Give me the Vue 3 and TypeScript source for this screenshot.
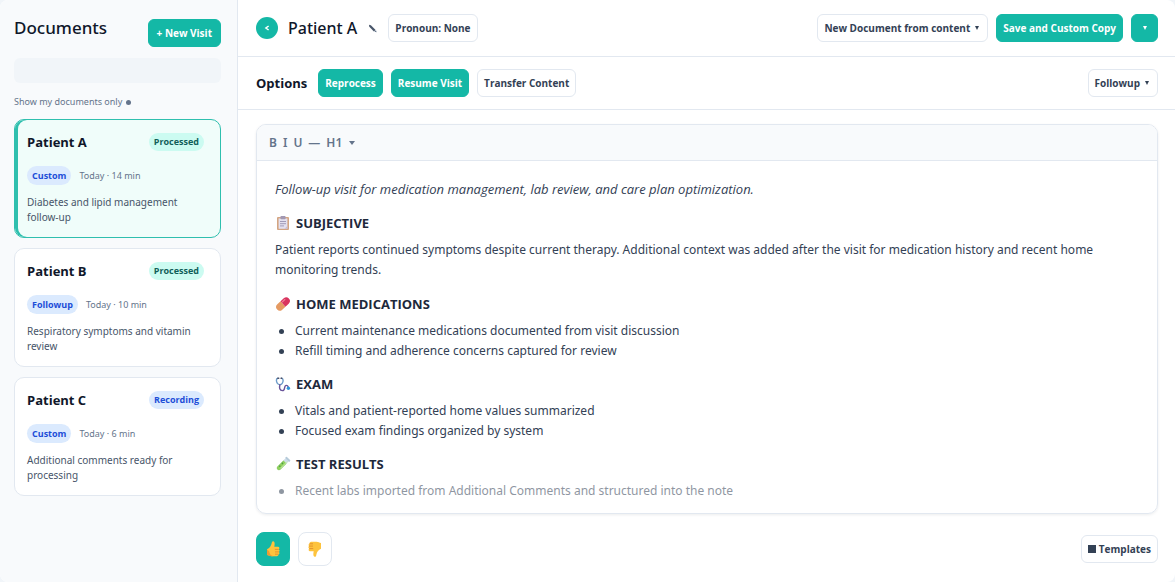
<script setup lang="ts">
interface Visit {
  id: string
  name: string
  status: string
  tone: 'done' | 'live'
  kind: string
  time: string
  summary: string
}

interface Section {
  icon: 'clipboard' | 'pill' | 'stethoscope' | 'tube'
  title: string
  text?: string
  items?: string[]
  faded?: boolean
}

const visits: Visit[] = [
  { id: 'a', name: 'Patient A', status: 'Processed', tone: 'done', kind: 'Custom', time: 'Today · 14 min', summary: 'Diabetes and lipid management follow-up' },
  { id: 'b', name: 'Patient B', status: 'Processed', tone: 'done', kind: 'Followup', time: 'Today · 10 min', summary: 'Respiratory symptoms and vitamin review' },
  { id: 'c', name: 'Patient C', status: 'Recording', tone: 'live', kind: 'Custom', time: 'Today · 6 min', summary: 'Additional comments ready for processing' },
]
const activeId = 'a'

const sections: Section[] = [
  {
    icon: 'clipboard',
    title: 'SUBJECTIVE',
    text: 'Patient reports continued symptoms despite current therapy. Additional context was added after the visit for medication history and recent home monitoring trends.',
  },
  {
    icon: 'pill',
    title: 'HOME MEDICATIONS',
    items: ['Current maintenance medications documented from visit discussion', 'Refill timing and adherence concerns captured for review'],
  },
  {
    icon: 'stethoscope',
    title: 'EXAM',
    items: ['Vitals and patient-reported home values summarized', 'Focused exam findings organized by system'],
  },
  {
    icon: 'tube',
    title: 'TEST RESULTS',
    items: ['Recent labs imported from Additional Comments and structured into the note'],
    faded: true,
  },
]
</script>

<template>
  <div class="app">
    <aside class="sidebar">
      <div class="side-head">
        <h1>Documents</h1>
        <button class="btn primary" type="button">+ New Visit</button>
      </div>
      <input class="search" type="search" aria-label="Search documents" />
      <button class="filter" type="button">Show my documents only <span class="dot"></span></button>
      <div class="visits">
        <article v-for="v in visits" :key="v.id" class="visit" :class="{ active: v.id === activeId }">
          <div class="visit-head">
            <h2>{{ v.name }}</h2>
            <span class="status" :class="v.tone">{{ v.status }}</span>
          </div>
          <div class="visit-meta">
            <span class="kind">{{ v.kind }}</span>
            <span class="time">{{ v.time }}</span>
          </div>
          <p>{{ v.summary }}</p>
        </article>
      </div>
    </aside>

    <main class="main">
      <header class="bar top">
        <button class="back" type="button" aria-label="Back">
          <svg width="6" height="6" viewBox="0 0 6 6"><path d="M4.6 1 L1.9 3 L4.6 5" fill="none" stroke="#fff" stroke-width="1.5" /></svg>
        </button>
        <h2 class="patient">Patient A</h2>
        <button class="edit" type="button" aria-label="Edit name">
          <svg width="9" height="9" viewBox="0 0 9 9"><path d="M1 .8 L2.9 1.2 L7.6 5.9 L5.9 7.4 L1.3 2.8Z" fill="#475569" /><path d="M6.4 7.8 L8 6.3 L8.6 8.3Z" fill="#64748b" /></svg>
        </button>
        <button class="btn" type="button">Pronoun: None</button>
        <span class="spacer"></span>
        <button class="btn" type="button">New Document from content <span class="caret"></span></button>
        <button class="btn primary" type="button">Save and Custom Copy</button>
        <button class="btn primary more" type="button" aria-label="More save options"><span class="caret"></span></button>
      </header>

      <div class="bar options">
        <h3>Options</h3>
        <button class="btn primary" type="button">Reprocess</button>
        <button class="btn primary" type="button">Resume Visit</button>
        <button class="btn" type="button">Transfer Content</button>
        <span class="spacer"></span>
        <button class="btn" type="button">Followup <span class="caret"></span></button>
      </div>

      <section class="editor">
        <div class="tools">
          <button type="button">B</button>
          <button type="button">I</button>
          <button type="button">U</button>
          <button type="button">—</button>
          <button type="button">H1 <span class="caret"></span></button>
        </div>
        <div class="note">
          <p class="lead">Follow-up visit for medication management, lab review, and care plan optimization.</p>
          <section v-for="s in sections" :key="s.title" class="block">
            <h4>
              <svg v-if="s.icon === 'clipboard'" width="16" height="16" viewBox="0 0 16 16">
                <rect x="2" y="2" width="12" height="13" rx="1" fill="#d4a582" />
                <rect x="3.6" y="3.4" width="8.8" height="10.4" fill="#e3e0ef" />
                <rect x="5.4" y="1" width="5.2" height="3.2" rx="1" fill="#a298b2" />
                <path d="M5 6.5h6M5 8.7h6M5 10.9h4" stroke="#a19bb8" stroke-width="1" />
                <path d="M12.4 11v2.8H9.6z" fill="#c6bcd6" />
              </svg>
              <svg v-else-if="s.icon === 'pill'" width="16" height="16" viewBox="0 0 16 16">
                <g transform="rotate(-43 8 8)">
                  <path d="M8 4.4H3.6a3.6 3.6 0 0 0 0 7.2H8z" fill="#e59a62" />
                  <path d="M8 4.4h4.4a3.6 3.6 0 0 1 0 7.2H8z" fill="#d9345f" />
                  <path d="M9 6h3.4" stroke="#f07d98" stroke-width="1.2" stroke-linecap="round" />
                </g>
              </svg>
              <svg v-else-if="s.icon === 'stethoscope'" width="16" height="16" viewBox="0 0 16 16" fill="none" stroke-linecap="round">
                <path d="M2.9 2.2 C.7 2.5 1.3 5.8 2.4 7.4 C3.6 9 6.1 9 7.2 7.4 C8.4 5.8 8.6 2.6 6.7 2.2" stroke="#6d9cc9" stroke-width="1.4" />
                <path d="M4.9 8.8 C4.1 11.5 4.6 14.6 7.4 14.6 C10.8 14.6 8.5 9.4 11.3 9.4 C12.7 9.4 13 10.2 13.2 11" stroke="#69549a" stroke-width="1.4" />
                <circle cx="13.4" cy="12.2" r="1.7" fill="#2f95d8" />
                <path d="M2.9 2.2h.8M6.1 2.2h.6" stroke="#4c5068" stroke-width="1.6" />
              </svg>
              <svg v-else width="16" height="16" viewBox="0 0 16 16">
                <g transform="rotate(45 8 8)">
                  <path d="M5.8 1.5h4.4v12.2a2.2 2.2 0 0 1-4.4 0z" fill="#cdddea" />
                  <path d="M5.8 5.2h4.4v8.5a2.2 2.2 0 0 1-4.4 0z" fill="#8fd05d" />
                  <rect x="5" y=".2" width="6" height="1.9" rx=".8" fill="#b5cad9" />
                  <path d="M9.2 3v10" stroke="#c5edaa" stroke-width=".9" />
                  <circle cx="7.2" cy="8" r=".8" fill="#4f9e45" />
                  <circle cx="7.3" cy="11.8" r=".8" fill="#4f9e45" />
                </g>
              </svg>
              {{ s.title }}
            </h4>
            <p v-if="s.text">{{ s.text }}</p>
            <ul v-if="s.items" :class="{ faded: s.faded }">
              <li v-for="i in s.items" :key="i">{{ i }}</li>
            </ul>
          </section>
        </div>
      </section>

      <footer class="foot">
        <button class="vote on" type="button" aria-label="Good note">
          <svg width="16" height="18" viewBox="0 0 16 18">
            <path d="M2 9.2 C4.5 8.4 6 6 6.6 3.6 C6.8 2 7.2 1 8.3 1.2 C10 1.6 9.8 4.6 9.3 6.8 H13 a1.4 1.4 0 0 1 .7 2.6 a1.4 1.4 0 0 1 .2 2.5 a1.3 1.3 0 0 1-.3 2.3 C13.6 15.8 12.5 16.2 11 16.2 H6.5 C4.6 16.2 3.6 15.2 2 15z" fill="#fdc33d" />
            <path d="M9.8 9.4h3.9M10 11.9h3.9M10 14.2h3.4" stroke="#e28c2d" stroke-width=".9" />
            <path d="M2 9.2v5.8c1.6.2 2.6 1.2 4.5 1.2h2c-3-.4-4-2.4-4.3-4.6z" fill="#ee9b35" />
          </svg>
        </button>
        <button class="vote" type="button" aria-label="Poor note">
          <svg width="16" height="18" viewBox="0 0 16 18">
            <g transform="rotate(180 8 9)">
              <path d="M2 9.2 C4.5 8.4 6 6 6.6 3.6 C6.8 2 7.2 1 8.3 1.2 C10 1.6 9.8 4.6 9.3 6.8 H13 a1.4 1.4 0 0 1 .7 2.6 a1.4 1.4 0 0 1 .2 2.5 a1.3 1.3 0 0 1-.3 2.3 C13.6 15.8 12.5 16.2 11 16.2 H6.5 C4.6 16.2 3.6 15.2 2 15z" fill="#fdc33d" />
              <path d="M9.8 9.4h3.9M10 11.9h3.9M10 14.2h3.4" stroke="#e28c2d" stroke-width=".9" />
            </g>
          </svg>
        </button>
        <span class="spacer"></span>
        <button class="btn" type="button"><span class="square"></span>Templates</button>
      </footer>
    </main>
  </div>
</template>

<style>
body {
  background: #f1f5f9;
}
</style>

<style scoped>
* {
  box-sizing: border-box;
}
.app {
  display: flex;
  min-height: 100vh;
  overflow: hidden;
  border-radius: 8px;
  background: #fff;
  color: #334155;
  font-family: "Noto Sans", "Open Sans", sans-serif;
  font-size: 12px;
}
h1, h2, h3, h4, p, ul {
  margin: 0;
}
button {
  font: inherit;
  color: inherit;
  border: 0;
  background: none;
  padding: 0;
}
.sidebar {
  flex: 0 0 238px;
  padding: 19px 16px 14px 14px;
  background: #f8fafc;
  border-right: 1px solid #e2e8f0;
}
.side-head {
  display: flex;
  justify-content: space-between;
  align-items: flex-start;
}
h1 {
  color: #0f172a;
  font-size: 17px;
  line-height: 18px;
  font-weight: 500;
}
.btn {
  display: inline-flex;
  align-items: center;
  justify-content: center;
  height: 28px;
  padding: 0 6px;
  border: 1px solid #e2e8f0;
  border-radius: 6px;
  background: #fff;
  color: #334155;
  font-size: 10px;
  font-weight: 700;
  white-space: nowrap;
}
.btn.primary {
  border-color: #14b8a6;
  background: #14b8a6;
  color: #fff;
}
.side-head .btn {
  padding: 0 8px;
}
.more {
  width: 27px;
}
.caret {
  flex: none;
  width: 0;
  height: 0;
  margin: 0 2px 0 5px;
  border: 2px solid transparent;
  border-top: 4px solid currentColor;
  border-bottom: 0;
}
.more .caret {
  margin: 0;
}
.search {
  display: block;
  width: 100%;
  height: 25px;
  margin: 11px 0 12px;
  border: 0;
  border-radius: 6px;
  background: #f1f5f9;
}
.filter {
  display: flex;
  align-items: center;
  gap: 4px;
  color: #64748b;
  font-size: 9px;
  line-height: 14px;
}
.dot {
  width: 5px;
  height: 5px;
  border-radius: 50%;
  background: #64748b;
}
.visits {
  display: grid;
  gap: 10px;
  margin-top: 10px;
}
.visit {
  padding: 13px 16px 12px 12px;
  border: 1px solid #e2e8f0;
  border-radius: 10px;
  background: #fff;
}
.visit.active {
  border-color: #2fbfae;
  background: #f0fdfa;
  box-shadow: inset 3px 0 0 #2fbfae;
}
.visit-head {
  display: flex;
  align-items: center;
  justify-content: space-between;
}
.btn, .visit h2, .options h3, .lead, h4, .status, .kind {
  font-family: "Open Sans", "Noto Sans", sans-serif;
}
.visit h2 {
  color: #0f172a;
  font-size: 13px;
  line-height: 18px;
  font-weight: 700;
}
.status, .kind {
  padding: 0 5px;
  border-radius: 10px;
  background: #dbeafe;
  color: #1d4ed8;
  font-size: 9px;
  line-height: 18px;
  font-weight: 700;
}
.status.done {
  background: #ccfbf1;
  color: #115e59;
}
.visit-meta {
  display: flex;
  align-items: center;
  gap: 8px;
  margin: 15px 0 10px;
}
.kind {
  line-height: 19px;
}
.time {
  color: #64748b;
  font-size: 9px;
  line-height: 19px;
}
.visit p {
  color: #475569;
  font-size: 10px;
  line-height: 15px;
}
.main {
  flex: 1;
  min-width: 0;
  display: flex;
  flex-direction: column;
}
.bar {
  display: flex;
  align-items: center;
  gap: 8px;
  padding: 0 17px 0 18px;
  border-bottom: 1px solid #e2e8f0;
}
.top {
  height: 57px;
}
.options {
  height: 53px;
}
.spacer {
  flex: 1;
}
.back {
  display: grid;
  place-items: center;
  width: 22px;
  height: 22px;
  border-radius: 50%;
  background: #14b8a6;
}
.patient {
  margin-left: 2px;
  color: #0f172a;
  font-size: 16px;
  font-weight: 500;
}
.edit {
  display: grid;
  margin: 0 3px;
}
.options h3 {
  margin-right: 3px;
  color: #0f172a;
  font-size: 13px;
  font-weight: 700;
}
.editor {
  flex: 1;
  margin: 14px 17px 0 18px;
  border: 1px solid #e2e8f0;
  border-radius: 10px;
  overflow: hidden;
  box-shadow: 0 1px 3px rgba(15, 23, 42, 0.08);
}
.tools {
  display: flex;
  align-items: center;
  gap: 6px;
  height: 36px;
  padding: 0 12px;
  border-bottom: 1px solid #e2e8f0;
  background: #f8fafc;
  color: #64748b;
  font-size: 12px;
  font-weight: 600;
}
.tools button {
  display: flex;
  align-items: center;
}
.tools .caret {
  margin-left: 7px;
  border-width: 4px 3px 0;
}
.note {
  padding: 18px 18px 12px;
  line-height: 20px;
}
.lead {
  font-size: 13px;
  font-style: italic;
}
.block {
  margin-top: 13px;
}
.block:nth-of-type(1) {
  margin-top: 14px;
}
.block p {
  padding-bottom: 1px;
}
h4 {
  display: flex;
  align-items: center;
  gap: 5px;
  margin-bottom: 7px;
  color: #1e293b;
  font-size: 13px;
  line-height: 20px;
  font-weight: 700;
}
ul {
  padding-left: 4px;
  list-style: none;
}
li {
  display: flex;
  gap: 11px;
}
li::before {
  content: "";
  flex: none;
  width: 5px;
  height: 5px;
  margin-top: 8px;
  border-radius: 50%;
  background: currentColor;
}
.faded {
  opacity: 0.55;
}
.foot {
  display: flex;
  align-items: center;
  gap: 8px;
  padding: 18px 17px 16px 18px;
}
.vote {
  display: grid;
  place-items: center;
  width: 34px;
  height: 34px;
  border: 1px solid #e2e8f0;
  border-radius: 8px;
  background: #fff;
}
.vote.on {
  border-color: #14b8a6;
  background: #14b8a6;
}
.square {
  width: 8px;
  height: 8px;
  margin-right: 3px;
  background: #334155;
}
</style>
